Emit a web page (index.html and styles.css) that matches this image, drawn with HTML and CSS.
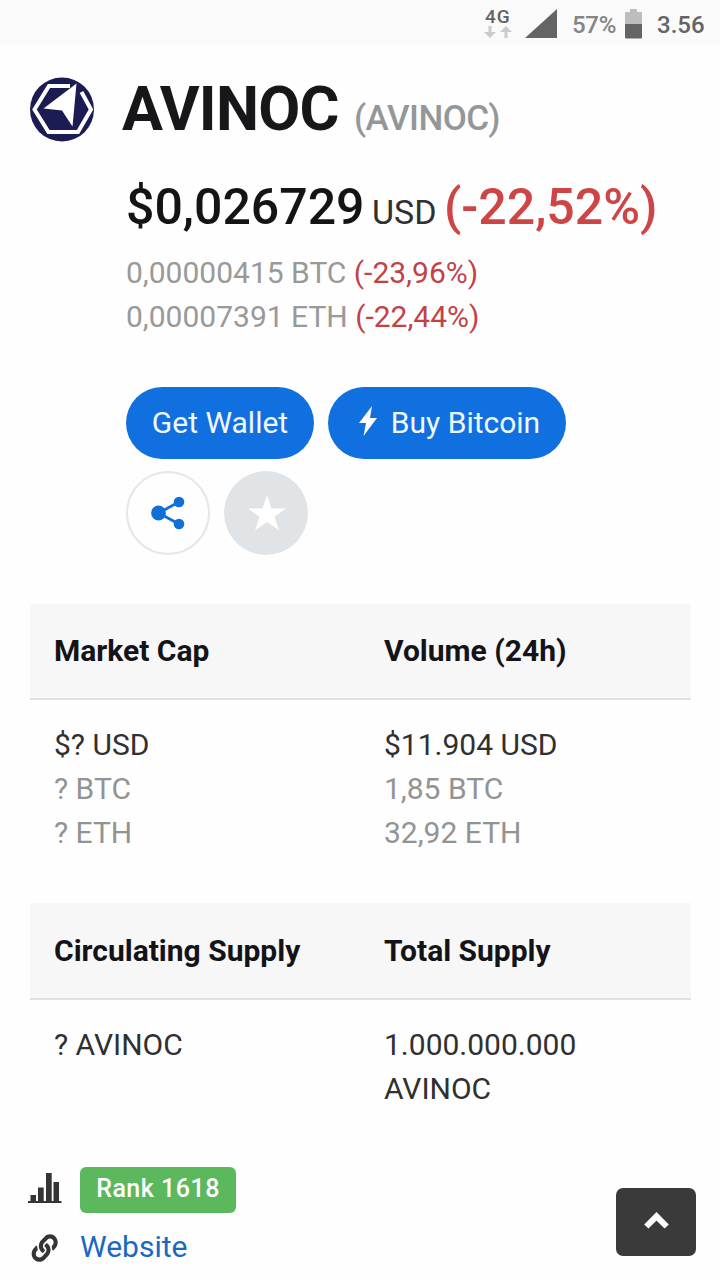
FILE: index.html
```html
<!DOCTYPE html>
<html lang="en">
<head>
<meta charset="utf-8">
<title>AVINOC</title>
<link rel="stylesheet" href="styles.css">
</head>
<body>
<header class="status">
  <div class="network">
    <span>4G</span>
    <svg width="28" height="12" viewBox="0 0 28 12"><path d="M4.500 0h3v6H12L6 12 0 6h4.500zM20.500 12h3V6H28L22 0l-6 6h4.500z" fill="#cbcbcb"/></svg>
  </div>
  <svg class="signal" width="32" height="29" viewBox="0 0 32 29"><path d="M32 0v29H0z" fill="#646464"/></svg>
  <span class="percent">57%</span>
  <svg class="battery" width="17" height="30" viewBox="0 0 17 30"><path d="M5 0h7v3h4q1 0 1 1v11H0V4q0-1 1-1h4z" fill="#bdbdbd"/><path d="M0 15h17v13.500q0 1-1 1H1q-1 0-1-1z" fill="#646464"/></svg>
  <span class="clock">3.56</span>
</header>
<main class="page">
  <div class="title">
    <svg class="logo" width="66" height="66" viewBox="0 0 66 66"><circle cx="33" cy="33.500" r="32" fill="#1b1c52"/><path d="M41 10H20L5.500 33.500 19.500 56h29.500L62 33.500 52.500 16" fill="none" stroke="#fff" stroke-width="4"/><path d="M47.500 7.500L14.500 32.500 33 34.500 43.500 50.500z" fill="#fff"/></svg>
    <h1 class="name">AVINOC</h1>
    <span class="symbol">(AVINOC)</span>
  </div>
  <section class="quote">
    <div class="price"><b class="amount">$0,026729</b><span class="unit">USD</span><span class="change">(-22,52%)</span></div>
    <div class="alt">0,00000415 BTC <span class="down">(-23,96%)</span></div>
    <div class="alt">0,00007391 ETH <span class="down">(-22,44%)</span></div>
    <div class="actions">
      <a class="pill wallet">Get Wallet</a>
      <a class="pill buy"><svg width="18" height="30" viewBox="0 0 18 30"><path d="M13 0L0 17h7L4.500 30 18 12h-7z" fill="#fff"/></svg><span>Buy Bitcoin</span></a>
      <a class="round share"><svg width="34" height="34" viewBox="0 0 34 34"><path d="M28 6L7.500 17 28 28" fill="none" stroke="#1070d8" stroke-width="2.800"/><circle cx="7.500" cy="17" r="7.400" fill="#1070d8"/><circle cx="28" cy="6" r="5.300" fill="#1070d8"/><circle cx="28" cy="28" r="5.300" fill="#1070d8"/></svg></a>
      <a class="round star"><svg width="38" height="36" viewBox="0 0 38 36"><path d="M19 0l4.500 13.400H38L26.500 21.800 31 35.200 19 27 7.200 35.200 11.500 21.800 0 13.400h14.500z" fill="#fff"/></svg></a>
    </div>
  </section>
  <section class="stats">
    <div class="head"><span>Market Cap</span><span>Volume (24h)</span></div>
    <div class="values">
      <div><p>$? USD</p><p class="muted">? BTC</p><p class="muted">? ETH</p></div>
      <div><p>$11.904 USD</p><p class="muted">1,85 BTC</p><p class="muted">32,92 ETH</p></div>
    </div>
  </section>
  <section class="stats supply">
    <div class="head"><span>Circulating Supply</span><span>Total Supply</span></div>
    <div class="values">
      <div><p>? AVINOC</p></div>
      <div><p>1.000.000.000 AVINOC</p></div>
    </div>
  </section>
  <section class="links">
    <div class="link rank"><svg width="34" height="30" viewBox="0 0 34 30"><path d="M0 28h33.500v2H0zM2.500 22H8v6H2.500zM10 14.500h5.700V28H10zM18 0h5.700v28H18zM25.500 9H31v19h-5.500z" fill="#353535"/></svg><span class="badge">Rank 1618</span></div>
    <div class="link site"><svg width="34" height="30" viewBox="0 0 34 30"><path transform="translate(3.700 1.300) scale(.0508 .0538)" fill="#353535" d="M326.612 185.391c59.747 59.809 58.927 155.698.36 214.590-.11.12-.24.25-.36.37l-67.200 67.200c-59.270 59.270-155.699 59.262-214.960 0-59.270-59.260-59.270-155.700 0-214.960l37.106-37.106c9.840-9.840 26.786-3.300 27.294 10.606.648 17.722 3.826 35.527 9.690 52.721 1.986 5.822.567 12.262-3.783 16.612l-13.087 13.087c-28.026 28.026-28.905 73.660-1.155 101.960 28.024 28.579 74.086 28.749 102.325.51l67.200-67.190c28.191-28.191 28.073-73.757 0-101.830-3.701-3.694-7.429-6.564-10.341-8.569a16.037 16.037 0 0 1-6.947-12.606c-.396-10.567 3.348-21.456 11.698-29.806l21.054-21.055c5.521-5.521 14.182-6.199 20.584-1.731a152.482 152.482 0 0 1 20.522 17.197zM467.547 44.449c-59.261-59.262-155.690-59.270-214.960 0l-67.200 67.200c-.12.12-.25.25-.36.37-58.566 58.892-59.387 154.781.36 214.590a152.454 152.454 0 0 0 20.521 17.196c6.402 4.468 15.064 3.789 20.584-1.731l21.054-21.055c8.350-8.350 12.094-19.239 11.698-29.806a16.037 16.037 0 0 0-6.947-12.606c-2.912-2.005-6.640-4.875-10.341-8.569-28.073-28.073-28.191-73.639 0-101.830l67.200-67.190c28.239-28.239 74.300-28.069 102.325.51 27.750 28.300 26.872 73.934-1.155 101.960l-13.087 13.087c-4.350 4.350-5.769 10.790-3.783 16.612 5.864 17.194 9.042 34.999 9.690 52.721.509 13.906 17.454 20.446 27.294 10.606l37.106-37.106c59.271-59.259 59.271-155.699.001-214.959z"/></svg><a>Website</a></div>
  </section>
</main>
<button class="top" aria-label="Back to top"><svg width="25" height="17" viewBox="0 0 25 17"><path d="M2.300 14.500L12.500 4.300 22.700 14.500" fill="none" stroke="#fff" stroke-width="6"/></svg></button>
</body>
</html>
```
FILE: styles.css
```css
* { box-sizing: border-box; }
body { margin: 0; height: 1280px; overflow: hidden; background: #fefefe; color: #303030; font: 30px/44px Roboto, sans-serif; }
svg { display: block; flex: none; }
p, h1 { margin: 0; }
.status { height: 48px; background: linear-gradient(#fafafa 42px, #fefefe); display: flex; color: #646464; white-space: nowrap; }
.network { width: 28px; margin-left: 484px; padding-top: 7px; font-size: 19px; line-height: 19px; font-weight: 500; letter-spacing: 1px; }
.network span { display: block; padding-left: 1px; }
.signal { margin: 9px 0 0 13px; }
.percent { width: 53px; margin-left: 15px; font-size: 24px; line-height: 51px; font-weight: 500; letter-spacing: -.3px; color: #858585; }
.battery { margin-top: 9px; }
.clock { margin-left: 15px; font-size: 24px; line-height: 51px; font-weight: 500; }
.page { padding: 28px 30px 0; }
.title { height: 91px; display: flex; align-items: baseline; }
.logo { align-self: flex-start; margin: 0 27px 0 -1px; }
.name { width: 232px; font-size: 61px; line-height: 66px; font-weight: 700; letter-spacing: -.8px; color: #17171a; }
.symbol { font-size: 35px; font-weight: 500; letter-spacing: -.5px; color: #939799; }
.quote { padding-left: 96px; }
.price { height: 84px; display: flex; align-items: baseline; line-height: 80px; white-space: nowrap; }
.amount { width: 246px; font-size: 50px; font-weight: 500; color: #141414; }
.unit { width: 72px; font-size: 34px; }
.change { font-size: 50px; font-weight: 500; color: #cd4545; }
.alt { color: #999; white-space: nowrap; }
.down { color: #c24248; }
.actions { width: 460px; margin-top: 48px; display: flex; flex-wrap: wrap; gap: 12px 14px; }
.pill { height: 72px; border-radius: 36px; background: #1070e0; color: #f0f8ff; display: flex; align-items: center; justify-content: center; white-space: nowrap; }
.wallet { width: 188px; }
.buy { width: 238px; gap: 14px; padding-left: 5px; }
.buy svg { margin-bottom: 4px; }
.round { width: 84px; height: 84px; border-radius: 50%; display: flex; align-items: center; justify-content: center; }
.share { border: 2px solid #e4e6e8; }
.star { background: #e0e4e7; padding: 0 0 0 2px; }
.stats { margin-top: 49px; width: 661px; }
.head { height: 96px; background: #f7f7f8; border-bottom: 2px solid #e0e1e4; color: #141418; font-weight: 700; line-height: 94px; }
.head, .values { display: grid; grid-template-columns: 330px 1fr; padding-left: 24px; }
.values { padding-top: 23px; height: 155px; }
.supply { margin-top: 48px; }
.supply .head { height: 97px; line-height: 96px; }
.values p { max-width: 240px; }
.muted { color: #929494; }
.links { margin: 12px 0 0 -2px; }
.link { display: flex; gap: 18px; }
.rank { height: 58px; }
.rank svg { margin-top: 6px; }
.badge { width: 156px; height: 46px; border-radius: 6px; background: #5cb85c; color: #fff; font-size: 25px; line-height: 43px; font-weight: 500; letter-spacing: .5px; text-align: center; }
.site svg { margin-top: 8px; }
.site a { color: #1a68c0; }
.top { position: fixed; left: 616px; top: 1188px; width: 80px; height: 68px; border: 0; border-radius: 7px; background: #3a3a3a; display: flex; align-items: center; justify-content: center; padding: 0 0 4px; }
```
